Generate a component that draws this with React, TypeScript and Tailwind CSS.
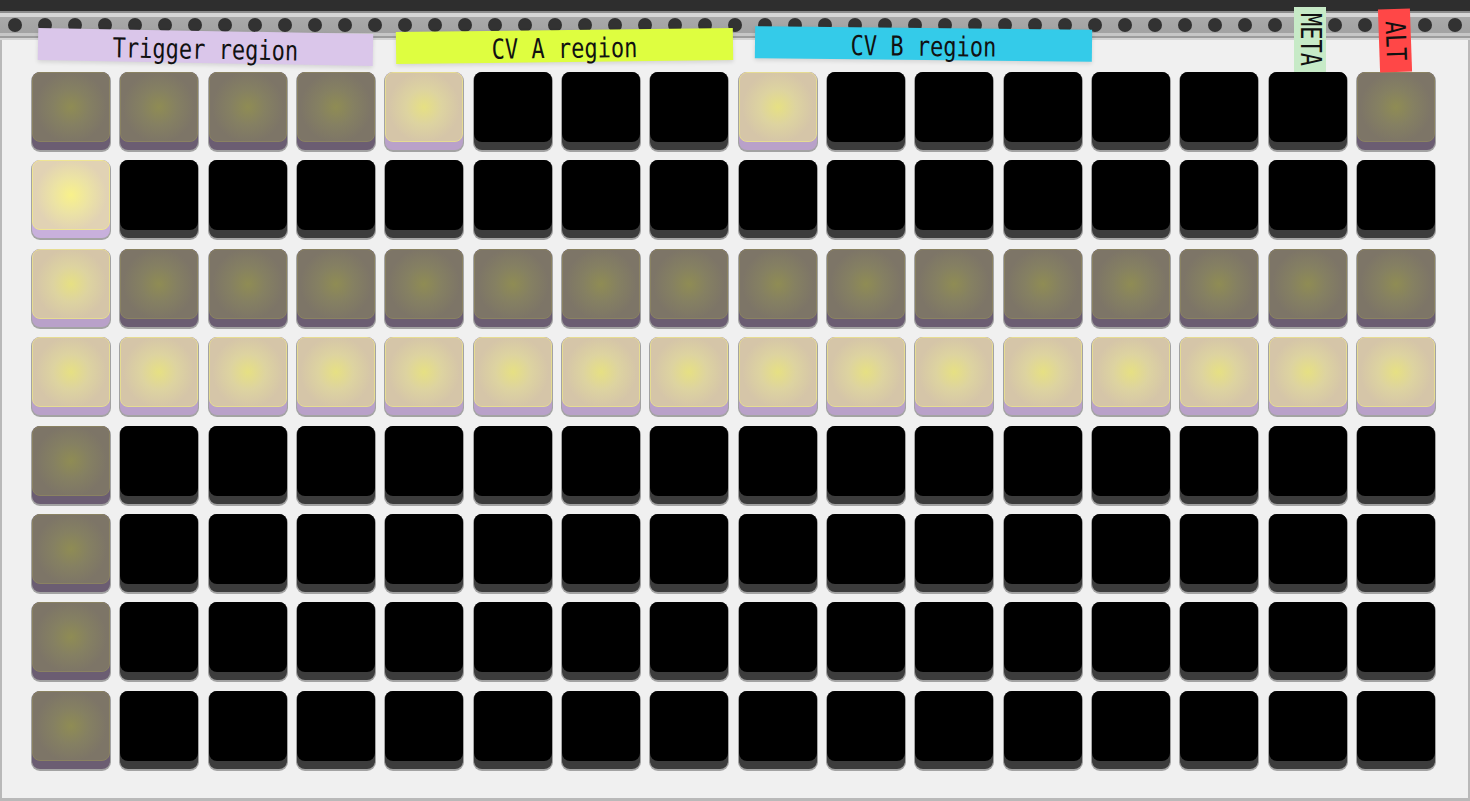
import React from 'react'

type Level = 0 | 1 | 2 | 3

// 0 = off, 1 = dim, 2 = lit, 3 = bright
const rows: Level[][] = [
  [1, 1, 1, 1, 2, 0, 0, 0, 2, 0, 0, 0, 0, 0, 0, 1],
  [3, 0, 0, 0, 0, 0, 0, 0, 0, 0, 0, 0, 0, 0, 0, 0],
  [2, 1, 1, 1, 1, 1, 1, 1, 1, 1, 1, 1, 1, 1, 1, 1],
  [2, 2, 2, 2, 2, 2, 2, 2, 2, 2, 2, 2, 2, 2, 2, 2],
  [1, 0, 0, 0, 0, 0, 0, 0, 0, 0, 0, 0, 0, 0, 0, 0],
  [1, 0, 0, 0, 0, 0, 0, 0, 0, 0, 0, 0, 0, 0, 0, 0],
  [1, 0, 0, 0, 0, 0, 0, 0, 0, 0, 0, 0, 0, 0, 0, 0],
  [1, 0, 0, 0, 0, 0, 0, 0, 0, 0, 0, 0, 0, 0, 0, 0],
]

const lipClasses: Record<Level, string> = {
  0: 'bg-[#3c3c3c]',
  1: 'bg-[#6b5d72]',
  2: 'bg-[#b9a1c9]',
  3: 'bg-[#c8b0dc]',
}

const faceClasses: Record<Level, string> = {
  0: 'bg-black',
  1: 'bg-[radial-gradient(circle_at_50%_50%,#8f8c54_0%,#858062_35%,#7d7567_70%)] border border-[#8a8262]',
  2: 'bg-[radial-gradient(circle_at_50%_50%,#e6e083_0%,#ddd3a0_35%,#d5c5a8_70%)] border border-[#e6dc92]',
  3: 'bg-[radial-gradient(circle_at_50%_50%,#f8f18a_0%,#ece3a4_35%,#e1d2b4_70%)] border border-[#efe592]',
}

function Pad({ level }: { level: Level }) {
  return (
    <div className={`h-[78px] rounded-[8px] shadow-[0_1px_0_1px_#a3a3a3] ${lipClasses[level]}`}>
      <div className={`h-[70px] rounded-[8px] ${faceClasses[level]}`} />
    </div>
  )
}

const tapeText =
  "font-['DejaVu_Sans_Mono',monospace] text-[22px] text-[#111] inline-block scale-y-125 translate-y-[2px]"
const sideText =
  "[writing-mode:vertical-rl] font-['DejaVu_Sans_Mono',monospace] text-[22px] text-[#111] leading-none scale-x-125"

export default function App() {
  const holes = Array.from({ length: 49 }, (_, i) => i)

  return (
    <div className="relative w-[1470px] h-[801px] flex flex-col bg-[#f0f0f0] overflow-hidden">
      <div className="h-[11px] bg-[#2e2e2e]" />
      <div className="h-[2px] bg-[#8c8c8c]" />
      <div className="h-[4px] bg-[#d6d6d6]" />
      <div className="h-[16px] bg-[linear-gradient(#a9a9a9,#a2a2a2)] flex items-center">
        {holes.map((i) => (
          <div key={i} className="w-[14px] h-[14px] rounded-full bg-[#323232] mx-[8px] shrink-0" />
        ))}
      </div>
      <div className="h-[3px] bg-[#c6c6c6]" />
      <div className="h-[2px] bg-[#9c9c9c]" />
      <div className="h-[2px] bg-[#d4d4d4]" />

      <div className="flex-1 border-l-2 border-r-2 border-b-[3px] border-[#b9b9b9] bg-[#f0f0f0] pl-[30px] pt-[32px]">
        <div className="grid grid-cols-16 w-[1403px] gap-x-[10.33px] gap-y-[10.4px]">
          {rows.map((row, r) =>
            row.map((level, c) => <Pad key={`${r}-${c}`} level={level} />)
          )}
        </div>
      </div>

      {/* tape labels */}
      <div className="absolute left-[38px] top-[31px] w-[335px] h-[32px] bg-[#dac6ea] rotate-[1deg] shadow-[0_2px_4px_rgba(0,0,0,0.12)] flex items-center justify-center">
        <span className={tapeText}>Trigger region</span>
      </div>
      <div className="absolute left-[396px] top-[30px] w-[337px] h-[32px] bg-[#defe40] -rotate-[0.7deg] shadow-[0_2px_4px_rgba(0,0,0,0.12)] flex items-center justify-center">
        <span className={tapeText}>CV A region</span>
      </div>
      <div className="absolute left-[755px] top-[28px] w-[337px] h-[32px] bg-[#34cbe9] rotate-[0.6deg] shadow-[0_2px_4px_rgba(0,0,0,0.12)] flex items-center justify-center">
        <span className={tapeText}>CV B region</span>
      </div>
      <div className="absolute left-[1294px] top-[7px] w-[32px] h-[65px] bg-[#c7eac7] flex items-center justify-center">
        <span className={sideText}>META</span>
      </div>
      <div className="absolute left-[1379px] top-[9px] w-[32px] h-[63px] bg-[#ff4747] -rotate-[2deg] flex items-center justify-center">
        <span className={sideText}>ALT</span>
      </div>
    </div>
  )
}
